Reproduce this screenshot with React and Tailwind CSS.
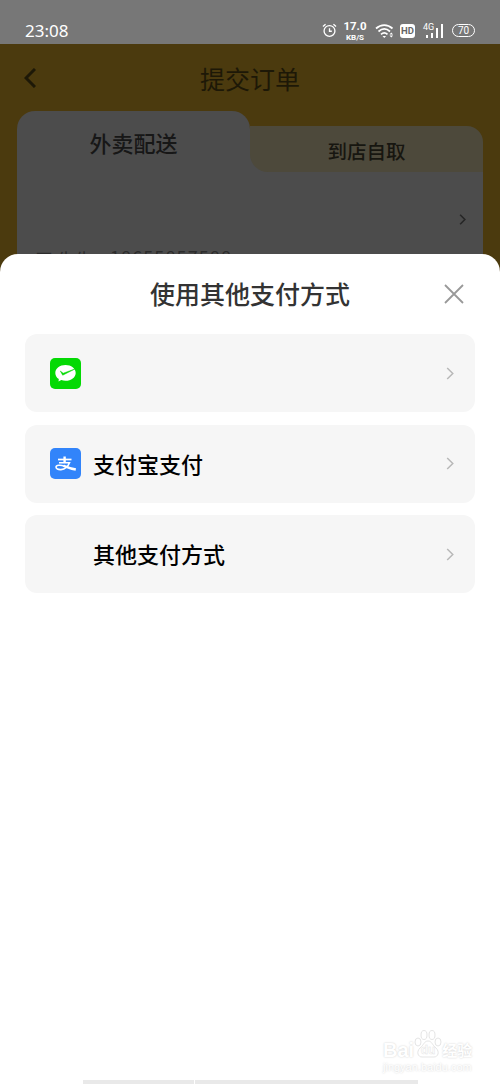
import {useState} from "react";

const rows = [
{id:"wechat",name:"",icon:<WechatIcon/>},
{id:"alipay",name:"支付宝支付",icon:<AlipayIcon/>},
{id:"other",name:"其他支付方式",icon:null}
];

function Arrow({className,width=2}){
return(
<svg viewBox="0 0 8 14" className={className} fill="none" stroke="currentColor" strokeWidth={width}>
<path d="M1 1l6 6-6 6"/>
</svg>
)
}

function WechatIcon(){
return(
<svg viewBox="0 0 31 31" className="size-[31px]">
<rect width="31" height="31" rx="5" fill="#04d904"/>
<path d="M15.5 7C9.800 7 5.300 10.400 5.300 14.900c0 2.500 1.400 4.700 3.500 6.100l-.3 2.500 2.800-1.400c1.300.5 2.700.7 4.200.7 5.700 0 10.200-3.500 10.200-7.900S21.200 7 15.500 7z" fill="#fff"/>
<path d="M10.300 13l2.400 4.200 12.200-6.200-11.700 4.200z" fill="#04d904" stroke="#04d904" strokeWidth=".5" strokeLinejoin="round"/>
</svg>
)
}

function AlipayIcon(){
return(
<svg viewBox="0 0 31 31" className="size-[31px]">
<rect width="31" height="31" rx="5" fill="#3284fa"/>
<g fill="none" stroke="#fff">
<path d="M8 11.500h13.500" strokeWidth="1.700"/>
<path d="M14.600 8.500v6.500" strokeWidth="2.400"/>
<path d="M9 14.800h10.500c-1.200 3-4 6.500-8.500 6.800-3 .2-5-.8-5-2.500.2-2.300 4.700-2.300 8.500-.9" strokeWidth="1.600"/>
<path d="M13.500 17.700c4 1.600 7.500 3.100 12.300 3.900" strokeWidth="2.500"/>
</g>
</svg>
)
}

function StatusBar(){
return(
<div className="h-11 bg-[#777] text-white flex items-end justify-between pl-[25px] pr-[25px] pb-[3px]">
<span className="text-[17px] leading-[20px] font-['Noto_Sans']">23:08</span>
<div className="flex items-center h-[21px]">
<svg viewBox="0 0 16 16" className="size-[15px] mr-[6px]" fill="none" stroke="currentColor" strokeWidth="1.4">
<circle cx="8" cy="8.500" r="5.800"/>
<path d="M8 5.500v3.300h2.500M1 3.800l2.800-2.500M15 3.800l-2.800-2.500"/>
</svg>
<div className="w-[24px] h-[23px] text-center font-bold font-[Roboto]">
<div className="text-[11.500px] leading-[14px]">17.0</div>
<div className="text-[8px] leading-[9px]">KB/S</div>
</div>
<svg viewBox="0 0 20 16" className="w-5 h-4 ml-[8px]" fill="none" stroke="currentColor" strokeWidth="1.700">
<path d="M1 5.500c5-4.600 11.500-4.600 16.500 0M3.500 8.500c3.600-3.200 8-3.200 11.500 0M6 11.300c2-1.800 4.500-1.800 6.500 0"/>
<path d="M7.500 13l1.800 2 1.800-2z" fill="currentColor" stroke="none"/>
<path d="M14.500 11.500l1.800-2 1.800 2zM14.500 12.500l1.800 2 1.800-2z" fill="currentColor" stroke="none"/>
</svg>
<span className="w-[15px] h-[14px] ml-[5px] rounded-[3px] bg-white text-[#666] text-[9.500px] leading-[14px] font-bold text-center font-[Roboto]">HD</span>
<div className="relative w-[21px] h-[16px] ml-[8px]">
<span className="absolute left-0 top-0 text-[9px] leading-[9px] font-[Roboto]">4G</span>
<svg viewBox="0 0 21 16" className="w-[21px] h-4" fill="currentColor">
<path d="M3 12h2v3H3zM8 10h2v5H8zM13 5h2v10h-2zM18 1h2v14h-2z"/>
</svg>
</div>
<span className="w-[23px] h-[13px] ml-[8px] border-[1.500px] border-white rounded-full text-[10px] leading-[11px] text-center font-[Roboto]">70</span>
</div>
</div>
)
}

function OrderPage(){
return(
<div className="h-[230px] overflow-hidden bg-[#4b3a0e] px-[17px]">
<div className="h-[67px] flex items-center relative text-[#1d1807]">
<svg viewBox="0 0 12 20" className="w-3 h-5 ml-[7px]" fill="none" stroke="currentColor" strokeWidth="3">
<path d="M11 1L2 10l9 9"/>
</svg>
<h1 className="absolute inset-x-0 top-[16px] text-center text-[25px] leading-9">提交订单</h1>
</div>
<div className="grid grid-cols-2">
<div className="h-[61px] pt-[15px] bg-[#4c4c4c] rounded-t-[18px] text-center text-[22px] leading-8 text-[#171717] font-medium">外卖配送</div>
<div className="h-[61px] pt-[15px] bg-[linear-gradient(90deg,#4c4c4c_20px,transparent_20px)] bg-[position:0_16px] bg-no-repeat">
<div className="h-[46px] pt-[10px] bg-[#4d493b] rounded-tr-[16px] rounded-bl-[18px] text-center text-[19.500px] leading-[30px] text-[#171610] font-medium">到店自取</div>
</div>
</div>
<div className="h-[102px] bg-[#4c4c4c] pl-[18px] pr-[17px]">
<div className="h-[75px] flex justify-end pt-[42px]">
<Arrow className="w-[7px] h-[11px] text-[#262626]"/>
</div>
<p className="flex text-[18px] leading-6 text-[#2c2c2c] whitespace-pre">
<span className="w-[75px]">王 先生</span>
<span className="-mt-[3px] tracking-[1.100px]">18655857588</span>
</p>
</div>
</div>
)
}

function Watermark(){
return(
<div className="absolute left-[383px] top-[1029px] text-white [text-shadow:0_0_2px_#ccc]">
<div className="flex items-center h-[30px] font-bold font-['Liberation_Sans'] text-[20px]">
<span className="pt-3">Bai</span>
<svg viewBox="0 0 28 30" className="w-7 h-[30px]" fill="#fff" stroke="#e5e5e5">
<ellipse cx="4" cy="13" rx="3" ry="4"/>
<ellipse cx="10" cy="6" rx="3" ry="4.500"/>
<ellipse cx="18" cy="6" rx="3" ry="4.500"/>
<ellipse cx="24" cy="13" rx="3" ry="4"/>
<path d="M14 12c-4 0-4 4-8 7-4 4-2 9 2 9h12c4 0 6-5 2-9-4-3-4-7-8-7z"/>
<text x="14" y="25" textAnchor="middle" fontSize="12" strokeWidth=".5" className="[text-shadow:none]">du</text>
</svg>
<span className="pt-3 text-[15px] font-['Noto_Sans_CJK_SC']">经验</span>
</div>
<div className="pt-[1px] text-[11px] leading-[14px] font-['Liberation_Sans']">jingyan.baidu.com</div>
</div>
)
}

function App(){

const [open,setOpen] = useState(true);

return(

<div className="relative w-[500px] h-[1084px] overflow-hidden bg-[#4b3a0e] font-['Noto_Sans_CJK_SC',sans-serif] flex flex-col">

<StatusBar/>
<OrderPage/>

{open && (
<div className="relative -mt-5 flex-1 flex flex-col bg-white rounded-t-[18px] px-[25px]">

<div className="h-[80px] flex items-center justify-center relative">
<h2 className="text-[25px] font-medium text-[#333]">使用其他支付方式</h2>
<button onClick={()=>setOpen(false)} className="absolute right-[11px] text-[#999]">
<svg viewBox="0 0 20 20" className="size-5" fill="none" stroke="currentColor" strokeWidth="1.800">
<path d="M1 1l18 18M19 1L1 19"/>
</svg>
</button>
</div>

<div className="flex flex-col gap-[12.500px] pt-[0.250px]">
{rows.map(row=>(
<button key={row.id} className="h-[78px] flex items-center bg-[#f6f6f6] rounded-[12px] pl-[25px] pr-[21px]">
<span className="w-[31px] mr-[12px]">{row.icon}</span>
<span className="flex-1 -mt-px text-left text-[22px] font-medium text-black">{row.name}</span>
<Arrow className="w-2 h-[13px] text-[#b8b8b8]" width={1.600}/>
</button>
))}
</div>

<div className="mt-auto ml-[58px] h-1 flex gap-px">
<span className="w-[111px] bg-[#e9e9e9]"></span>
<span className="w-[223px] bg-[#e9e9e9]"></span>
</div>

</div>
)}

<Watermark/>

</div>

)

}

export default App;
